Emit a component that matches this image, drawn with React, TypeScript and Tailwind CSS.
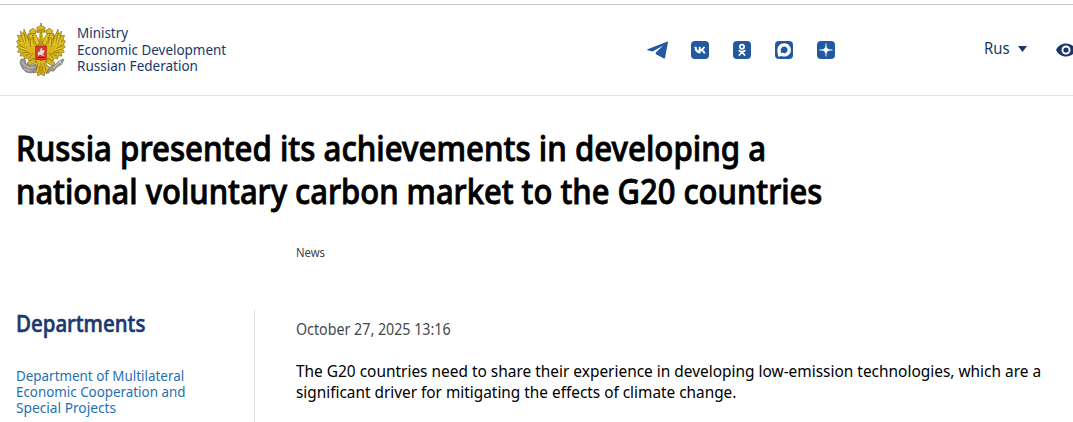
import type { ReactNode } from "react";

const Line = ({ className, children }: { className: string; children: ReactNode }) => (
  <span className={`block w-max origin-left whitespace-nowrap ${className}`}>{children}</span>
);

const Wing = () => (
  <g>
    <path
      d="M22 21 L20 15 L17 12 L14 15 L13 10 L11 13 L8 6 L7.5 11 L4.5 8 L5 13 L1.5 12 L3 17 L0.5 18 L2.5 22 L0.5 24 L3.5 26 L1.5 29 L5 30 L4 33 L8 33 L8 36 L12 35 L13 38 L17 36 L21 37 Z"
      fill="#d9b71c"
      stroke="#806711"
      strokeWidth="0.6"
    />
    <path
      d="M8 10 L10 19 M5 12 L9 21 M3 17 L9 23 M3 22 L10 26 M4 26 L11 28 M6 30 L13 29 M9 33 L15 30 M13 35 L17 30 M12 13 L12 21 M14 16 L15 24 M17 14 L17 21"
      stroke="#8c7010"
      strokeWidth="0.8"
      fill="none"
    />
    <path d="M7 13 L9 20 M5 19 L10 23 M5 25 L11 27 M11 16 L12 22 M16 17 L16 23" stroke="#f4dc3c" strokeWidth="0.9" fill="none" />
    {/* neck, head and small crown */}
    <path
      d="M21 23 L17.5 17 L18 14 L15.5 15 L12.5 17 L13 14 L11.5 13.5 L14 11 L17 10.5 L20 12 L21.5 15 L24 20 Z"
      fill="#e2c121"
      stroke="#806711"
      strokeWidth="0.6"
    />
    <circle cx="16.6" cy="12.6" r="0.6" fill="#54430d" />
    <path d="M14 10.5 L13.5 7.5 L15.5 6.5 L16.7 5 L18 6.5 L20 7.5 L19.5 10.5 Z" fill="#dcbc22" stroke="#806711" strokeWidth="0.7" />
  </g>
);

const Emblem = () => (
  <svg viewBox="0 0 50 54" className="h-[54px] w-[50px] shrink-0">
    <path d="M18 7 Q20 10 23 9 M32 7 Q30 10 27 8.5" stroke="#ad8e18" strokeWidth="1.2" fill="none" />
    <path d="M23.5 8 L23 14 L20 20 L20 40 H30 V20 L27 14 L26.5 8 Z" fill="#dab91f" />
    <path d="M25 9 V22 M22.5 17 L24 22 M27.5 17 L26 22" stroke="#8c7010" strokeWidth="0.7" />
    <Wing />
    <g transform="translate(50 0) scale(-1 1)">
      <Wing />
    </g>
    <path d="M21.5 9 L20.8 4.5 L23 3.4 L25 2.5 L27 3.4 L29.2 4.5 L28.5 9 Z" fill="#dfbd22" stroke="#806711" strokeWidth="0.7" />
    <path d="M25 0 V3 M23.8 1 H26.2 M22 7 H28" stroke="#806711" strokeWidth="0.8" />
    {/* tail and legs */}
    <path
      d="M20 36 L30 36 L30 41 L35 46 L32 47 L33 50 L29 49 L28 53 L25 51 L22 53 L21 49 L17 50 L18 47 L15 46 L20 41 Z"
      fill="#dab91f"
      stroke="#806711"
      strokeWidth="0.7"
    />
    <path d="M25 40 V51 M22 40 L20 48 M28 40 L30 48 M23.5 43 L23 50 M26.5 43 L27 50" stroke="#8c7010" strokeWidth="0.7" />
    <path d="M18 35 L11 40 L13 43 L20 39 Z M32 35 L39 40 L37 43 L30 39 Z" fill="#d7b51d" stroke="#806711" strokeWidth="0.7" />
    <path
      d="M5 36 L9 36.5 L10 41 L15 43 L19 41 L21 44 L19 48 L15 50 L10 49 L6 45 L4 40 Z"
      fill="#96969b"
      stroke="#5b5b62"
      strokeWidth="0.6"
    />
    <path d="M6 38 L8 42 L13 45 L18 44 M8 46 L14 48" stroke="#c4c4c9" strokeWidth="0.8" fill="none" />
    <path d="M30 51 L34 44 L39 42 L43 38 L48 36 L46 41 L41 44 L38 48 L34 48 Z" fill="#a19a8c" stroke="#6b675f" strokeWidth="0.6" />
    <path d="M37 45 L45 38 M43 38 L46 41" stroke="#dadada" strokeWidth="0.8" />
    {/* shield */}
    <path d="M19.5 23 H30.5 V35 Q30.5 36.5 29 36.5 H27 L25 37.8 L23 36.5 H21 Q19.5 36.5 19.5 35 Z" fill="#e03424" stroke="#9b2517" strokeWidth="0.6" />
    <path d="M21.5 31 L22.5 28.5 L24 28 L24.5 25.5 L26 25 L26.5 27.5 L28.5 27 L28 30 L26.5 31 L28.5 33 L26 32.5 L24 31.5 L22.5 33 Z" fill="#dce0ea" />
    <path d="M22 26 L24 27 L23 29" stroke="#5878b0" strokeWidth="1" fill="none" />
    <path d="M21.5 34.5 L28.5 34.5" stroke="#40342c" strokeWidth="0.8" />
  </svg>
);

const Badge = ({ children }: { children: ReactNode }) => (
  <a href="#" className="block">
    <svg viewBox="0 0 18 18" className="size-[18px]">
      <rect width="18" height="18" rx="4" fill="#2259a0" />
      {children}
    </svg>
  </a>
);

const Socials = () => (
  <div className="flex items-center">
    <a href="#" className="mr-[23px] block">
      <svg viewBox="0 0 21 18" className="h-[18px] w-[21px]">
        <path
          d="M20.6 0.6 L0.6 8.2 C-0.1 8.5 0 9 0.6 9.2 L5.6 10.6 L16.2 4.5 L8.6 11.8 L9 13.2 L16.9 17.5 C17.5 17.8 17.9 17.5 18 16.9 L21 1.1 C21 0.6 20.9 0.5 20.6 0.6 Z"
          fill="#2259a0"
        />
      </svg>
    </a>
    <div className="flex gap-6">
      <Badge>
        <path
          d="M3 5.8 H5.1 C5.2 8.4 6.2 9.5 7.2 9.8 V5.8 H9.1 V8 C10.3 7.8 11.3 6.9 11.7 5.8 H13.7 C13.3 7.4 12.3 8.4 11.5 8.9 C12.3 9.3 13.5 10.3 14.1 12.4 H12 C11.5 11.1 10.5 10.1 9.1 9.9 V12.4 H8.8 C5 12.4 3.1 9.9 3 5.8 Z"
          fill="#fff"
          transform="translate(0.5 0)"
        />
      </Badge>
      <Badge>
        <circle cx="9" cy="5.7" r="2.1" fill="none" stroke="#fff" strokeWidth="1.7" />
        <path d="M6.2 9.7 Q9 11.5 11.8 9.7 M9 11 L6.4 14 M9 11 L11.6 14" fill="none" stroke="#fff" strokeWidth="1.7" strokeLinecap="round" />
      </Badge>
      <Badge>
        <path
          d="M9.2 2.3 C13 2.3 15.9 5.2 15.9 9 C15.9 12.8 13 15.6 9.3 15.6 C8 15.6 7.2 15.3 6.3 14.7 C5.5 15.6 3.3 16.1 3.1 15 C3 13.5 2.4 11.5 2.4 9.1 C2.4 5.2 5.3 2.3 9.2 2.3 Z"
          fill="#fff"
        />
        <path
          d="M9.2 5.6 C11.1 5.6 12.6 7.1 12.6 9 C12.6 10.9 11.1 12.3 9.2 12.3 C8.3 12.3 7.8 12 7.1 11.5 C6.7 11.9 6.3 12.2 6.1 12 C5.8 11.3 5.7 10 5.8 8.8 C5.9 6.9 7.3 5.6 9.2 5.6 Z"
          fill="#2259a0"
        />
      </Badge>
      <Badge>
        <path d="M9 2.5 C9.2 7.6 10.4 8.8 15.5 9 C10.4 9.2 9.2 10.4 9 15.5 C8.8 10.4 7.6 9.2 2.5 9 C7.6 8.8 8.8 7.6 9 2.5 Z" fill="#fff" stroke="#fff" strokeWidth="0.5" />
      </Badge>
    </div>
  </div>
);

const Header = () => (
  <header className="mt-1 flex h-[92px] border-y border-t-[#c4c4c4] border-b-[#e2e2e2] pl-4">
    <a href="#" className="flex w-[631px] shrink-0 pt-[18px] text-sm leading-[16.5px] text-[#1a3767]">
      <Emblem />
      <div className="pt-[2px] pl-[11px]">
        <Line className="scale-x-[0.96]">Ministry</Line>
        <Line className="scale-x-[0.96]">Economic Development</Line>
        <Line className="scale-x-[0.965]">Russian Federation</Line>
      </div>
    </a>
    <div className="h-[90px] w-[337px] shrink-0">
      <div className="pt-9">
        <Socials />
      </div>
    </div>
    <button className="flex h-[90px] w-[72px] shrink-0 items-start pt-[33px] text-base leading-5 text-[#1a3767]">
      <span className="w-[34px]">
        <Line className="scale-x-[0.93]">Rus</Line>
      </span>
      <svg viewBox="0 0 9 6" className="mt-2 h-[6px] w-[9px]">
        <path d="M0 0 H9 L4.5 6 Z" fill="#1a3767" />
      </svg>
    </button>
    <svg viewBox="0 0 20 14" className="mt-[38px] h-[14px] w-5 shrink-0">
      <path d="M0 7 C2 2.8 5.5 0.5 10 0.5 C14.5 0.5 18 2.8 20 7 C18 11.2 14.5 13.5 10 13.5 C5.5 13.5 2 11.2 0 7 Z" fill="#1a3767" />
      <circle cx="10" cy="7" r="4.5" fill="#fff" />
      <circle cx="10" cy="7" r="2.6" fill="#1a3767" />
    </svg>
  </header>
);

export default function App() {
  return (
    <div className="flex h-[422px] w-[1073px] flex-col overflow-hidden bg-white font-['Noto_Sans',sans-serif] text-black">
      <Header />
      <h1 className="mt-[30px] pl-4 text-[35px] leading-[43px] font-medium [-webkit-text-stroke:0.9px_currentColor]">
        <Line className="scale-x-[0.892]">Russia presented its achievements in developing a</Line>
        <Line className="scale-x-[0.884]">national voluntary carbon market to the G20 countries</Line>
      </h1>
      <div className="mt-[33px] pl-[296px] text-xs leading-4 text-[#3f4347]">
        <Line className="scale-x-[0.94]">News</Line>
      </div>
      <div className="mt-[49px] flex flex-1">
        <aside className="w-[255px] border-r border-[#dedede] pl-4">
          <h2 className="-mt-px text-[23px] leading-7 font-medium text-[#1a3970] [-webkit-text-stroke:0.6px_currentColor]">
            <Line className="scale-x-[0.89]">Departments</Line>
          </h2>
          <a href="#" className="mt-[30.5px] block text-sm leading-4 text-[#1f6fb2]">
            <Line className="scale-x-[0.957]">Department of Multilateral</Line>
            <Line className="scale-x-[0.955]">Economic Cooperation and</Line>
            <Line className="scale-x-[0.98]">Special Projects</Line>
          </a>
        </aside>
        <article className="pt-[9px] pl-[41px]">
          <div className="text-base leading-5 text-[#45484c]">
            <Line className="scale-x-[0.89]">October 27, 2025 13:16</Line>
          </div>
          <p className="mt-[22px] text-base leading-[21px]">
            <Line className="scale-x-[0.964]">
              The G20 countries need to share their experience in developing low-emission technologies, which are a
            </Line>
            <Line className="scale-x-[0.96]">significant driver for mitigating the effects of climate change.</Line>
          </p>
        </article>
      </div>
    </div>
  );
}
